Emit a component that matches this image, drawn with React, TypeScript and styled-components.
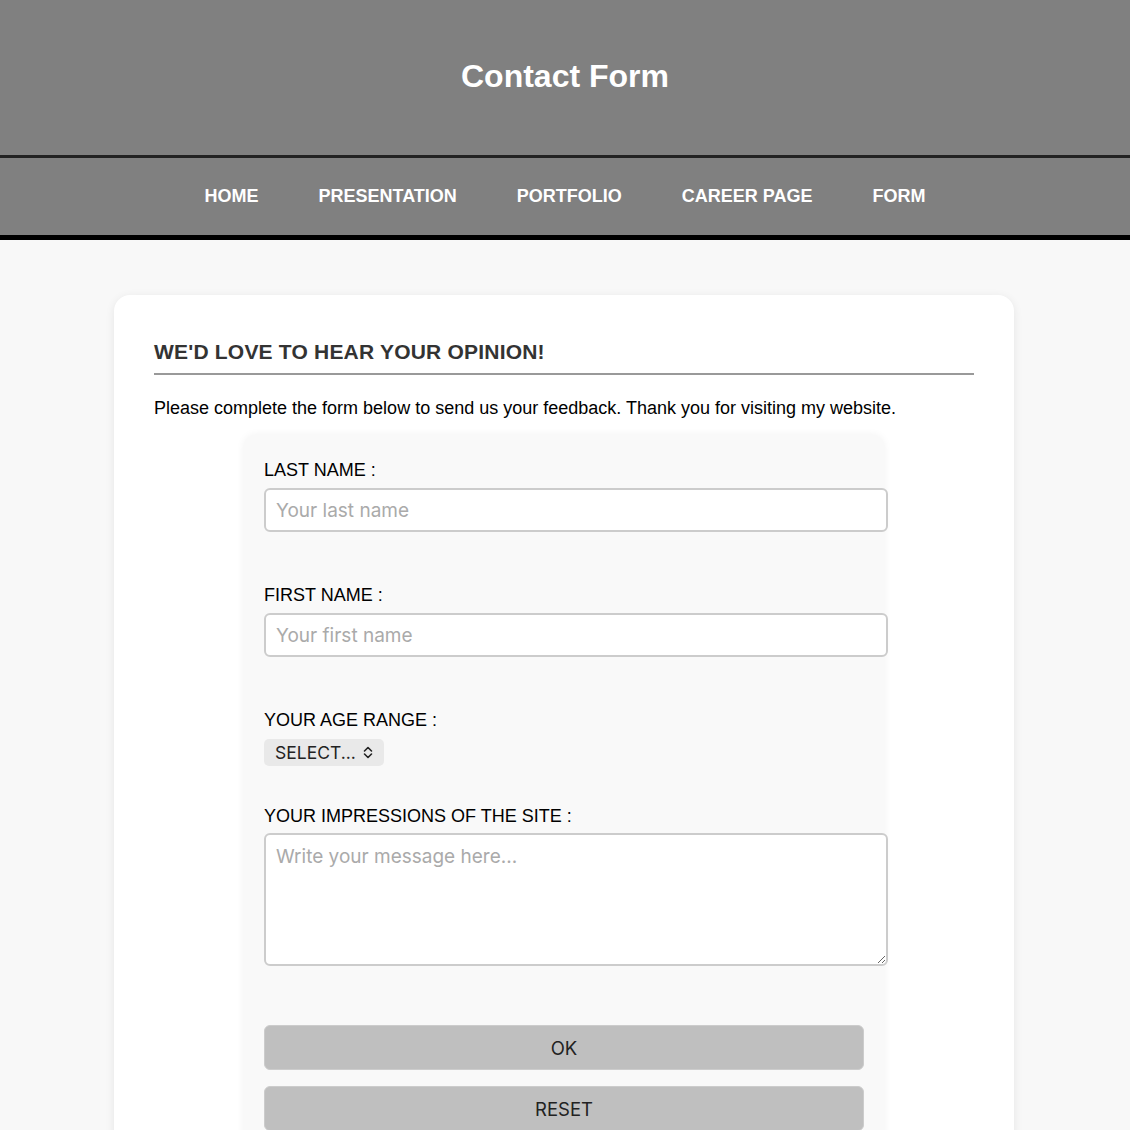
import React from 'react';
import styled, { createGlobalStyle } from 'styled-components';

const GlobalStyle = createGlobalStyle`
  html, body {
    margin: 0;
    padding: 0;
    background: #f8f8f8;
    font-family: "Liberation Sans", Arial, sans-serif;
  }
`;

const Header = styled.header`
  background: #808080;
  height: 155px;
  display: flex;
  align-items: center;
  justify-content: center;
  padding-bottom: 3px;
  box-sizing: border-box;
`;

const Title = styled.h1`
  margin: 0;
  color: #fff;
  font-size: 32px;
  font-weight: bold;
`;

const Nav = styled.nav`
  background: #808080;
  border-top: 3px solid #222;
  border-bottom: 5px solid #000;
  height: 77px;
  display: flex;
  align-items: center;
  justify-content: center;
  gap: 60px;
`;

const NavLink = styled.a`
  color: #fff;
  font-size: 18px;
  font-weight: bold;
  text-decoration: none;
  cursor: pointer;
`;

const Main = styled.main`
  padding: 55px 0 40px;
  display: flex;
  justify-content: center;
`;

const Card = styled.section`
  width: 820px;
  background: #fff;
  border-radius: 16px;
  box-shadow: 0 2px 10px rgba(0, 0, 0, 0.08);
  padding: 45px 40px 40px;
  margin-right: 2px;
`;

const Heading = styled.h2`
  margin: 0;
  font-size: 21px;
  letter-spacing: 0.2px;
  line-height: 24px;
  color: #333;
  padding-bottom: 9px;
  border-bottom: 2px solid #999;
`;

const Intro = styled.p`
  margin: 23px 0 16px;
  font-size: 18px;
  line-height: 21px;
  color: #000;
`;

const Form = styled.form`
  width: 600px;
  margin: 0 auto;
  background: #f9f9f9;
  border-radius: 12px;
  box-shadow: 0 0 8px rgba(0, 0, 0, 0.06);
  padding: 25px 20px 20px;
`;

const Field = styled.div<{ $space: number }>`
  margin-bottom: ${p => p.$space}px;
`;

const Label = styled.label<{ $gap?: number }>`
  display: block;
  font-size: 18px;
  line-height: 21px;
  color: #000;
  margin-bottom: ${p => p.$gap ?? 7}px;
`;

const TextInput = styled.input`
  display: block;
  box-sizing: border-box;
  width: calc(100% + 24px);
  height: 44px;
  padding: 0 10px;
  border: 2px solid #ccc;
  border-radius: 6px;
  background: #fff;
  font-family: Inter, "Noto Sans", sans-serif;
  font-size: 19px;
  color: #222;
  outline: none;
  &::placeholder {
    color: #aaa;
  }
`;

const SelectWrap = styled.div`
  position: relative;
  display: inline-block;
`;

const Select = styled.select`
  appearance: none;
  -webkit-appearance: none;
  height: 27px;
  width: 120px;
  padding: 0 20px 0 11px;
  border: none;
  border-radius: 5px;
  background: #e9e9e9;
  font-family: Inter, "Noto Sans", sans-serif;
  font-size: 17.5px;
  color: #222;
  outline: none;
`;

const Chevron = styled.svg`
  position: absolute;
  right: 11px;
  top: 7px;
  pointer-events: none;
`;

const TextArea = styled.textarea`
  display: block;
  box-sizing: border-box;
  width: calc(100% + 24px);
  height: 133px;
  padding: 10px 10px;
  border: 2px solid #ccc;
  border-radius: 6px;
  background: #fff;
  font-family: Inter, "Noto Sans", sans-serif;
  font-size: 19px;
  color: #222;
  outline: none;
  &::placeholder {
    color: #aaa;
  }
`;

const Button = styled.button`
  display: block;
  width: 100%;
  height: 45px;
  margin-bottom: 16px;
  background: #bfbfbf;
  border: 1px solid #ccc;
  border-radius: 6px;
  font-family: Inter, "Noto Sans", sans-serif;
  font-size: 18.5px;
  color: #222;
  cursor: pointer;
`;

const links = ['HOME', 'PRESENTATION', 'PORTFOLIO', 'CAREER PAGE', 'FORM'];

export default function App() {
  return (
    <>
      <GlobalStyle />
      <Header>
        <Title>Contact Form</Title>
      </Header>
      <Nav>
        {links.map(l => (
          <NavLink key={l}>{l}</NavLink>
        ))}
      </Nav>
      <Main>
        <Card>
          <Heading>WE'D LOVE TO HEAR YOUR OPINION!</Heading>
          <Intro>
            Please complete the form below to send us your feedback. Thank you for visiting my website.
          </Intro>
          <Form onSubmit={e => e.preventDefault()}>
            <Field $space={53}>
              <Label htmlFor="lastname">LAST NAME :</Label>
              <TextInput id="lastname" type="text" placeholder="Your last name" />
            </Field>
            <Field $space={53}>
              <Label htmlFor="firstname">FIRST NAME :</Label>
              <TextInput id="firstname" type="text" placeholder="Your first name" />
            </Field>
            <Field $space={40}>
              <Label htmlFor="age" $gap={8}>YOUR AGE RANGE :</Label>
              <SelectWrap>
                <Select id="age" defaultValue="">
                  <option value="">SELECT...</option>
                  <option value="18">18-25</option>
                  <option value="26">26-35</option>
                  <option value="36">36-50</option>
                  <option value="51">50+</option>
                </Select>
                <Chevron width="10" height="13" viewBox="0 0 10 13">
                  <path d="M1.5 5 L5 1.5 L8.5 5 M1.5 8 L5 11.5 L8.5 8" fill="none" stroke="#222" strokeWidth="1.6" strokeLinecap="round" strokeLinejoin="round" />
                </Chevron>
              </SelectWrap>
            </Field>
            <Field $space={59}>
              <Label htmlFor="message" $gap={6}>YOUR IMPRESSIONS OF THE SITE :</Label>
              <TextArea id="message" placeholder="Write your message here..." />
            </Field>
            <Button type="submit">OK</Button>
            <Button type="reset">RESET</Button>
          </Form>
        </Card>
      </Main>
    </>
  );
}
